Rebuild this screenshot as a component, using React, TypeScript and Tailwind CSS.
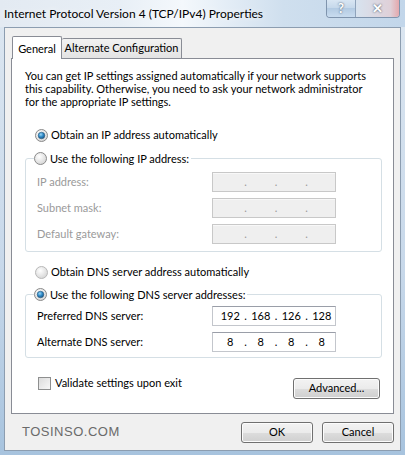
import React from "react";

const font = { fontFamily: 'Lato, "Noto Sans", sans-serif' };

function Radio({ checked, disabled }: { checked?: boolean; disabled?: boolean }) {
  return (
    <svg width="13" height="13" viewBox="0 0 13 13" className="shrink-0">
      <defs>
        <radialGradient id="rb" cx="0.4" cy="0.35" r="0.7">
          <stop offset="0" stopColor="#ffffff" />
          <stop offset="1" stopColor="#d4d4d4" />
        </radialGradient>
        <radialGradient id="rdot" cx="0.4" cy="0.35" r="0.7">
          <stop offset="0" stopColor="#9fd7f5" />
          <stop offset="0.5" stopColor="#2e8bc9" />
          <stop offset="1" stopColor="#1a4f7c" />
        </radialGradient>
      </defs>
      <circle cx="6.5" cy="6.5" r="6" fill="url(#rb)" stroke={disabled ? "#b8b8b8" : "#8a8a8a"} />
      {checked && <circle cx="6.5" cy="6.5" r="3.3" fill="url(#rdot)" stroke="#2a5a80" strokeWidth="0.6" />}
    </svg>
  );
}

function IpBox({ values, disabled }: { values?: string[]; disabled?: boolean }) {
  const v = values ?? ["", "", "", ""];
  return (
    <div
      className={`flex h-[20px] w-[124px] items-center pl-[4px] border ${
        disabled
          ? "bg-[#efefef] border-[#c8c8c8] shadow-[inset_0_1px_0_#f8f8f8]"
          : "bg-white border-[#c3c6cc] border-t-[#9a9ea8]"
      }`}
    >
      {v.map((x, i) => (
        <React.Fragment key={i}>
          <span className="w-[27px] text-center text-[11px] text-black">{x}</span>
          {i < 3 && (
            <span className={`w-[4px] text-center text-[11px] ${disabled ? "text-[#9a9a9a]" : "text-black"}`}>.</span>
          )}
        </React.Fragment>
      ))}
    </div>
  );
}

function Row({ label, disabled, values }: { label: string; disabled?: boolean; values?: string[] }) {
  return (
    <div className="flex h-[26px] items-center justify-between pl-[11px] pr-[45px]">
      <span className={`text-[11px] ${disabled ? "text-[#9a9a9a]" : "text-black"}`}>{label}</span>
      <IpBox disabled={disabled} values={values} />
    </div>
  );
}

function Button({ children, w }: { children: React.ReactNode; w: string }) {
  return (
    <button
      className={`${w} h-[21px] rounded-[3px] border border-[#707070] bg-[linear-gradient(#f3f3f3_0%,#ebebeb_50%,#dddddd_50%,#cfcfcf_100%)] text-[11px] text-black shadow-[inset_0_0_0_1px_#fcfcfc]`}
    >
      {children}
    </button>
  );
}

export default function App() {
  return (
    <div
      style={font}
      className="flex h-[455px] w-[405px] flex-col whitespace-nowrap bg-[linear-gradient(180deg,#dde7f1_0%,#c7d8ea_60%,#a7c3de_100%)]"
    >
      {/* Title bar */}
      <div className="relative flex h-[27px] shrink-0 items-center bg-[linear-gradient(90deg,#e3eaf2_0%,#e8eff6_30%,#f4f8fc_45%,#cfdfee_70%,#c2d6ea_100%)] pl-[4px]">
        <span className="text-[12px] text-black [text-shadow:0_0_6px_#ffffff]">
          Internet Protocol Version 4 (TCP/IPv4) Properties
        </span>
        <div className="absolute right-[5px] top-0 flex h-[18px] overflow-hidden rounded-b-[4px] border border-t-0 border-[#7f94ad]">
          <div className="flex w-[29px] items-center justify-center border-r border-[#8fa3bb] bg-[linear-gradient(#d9e6f3,#c4d7ea_50%,#b3cbe3_50%,#c9dcef)] text-[13px] font-bold text-white [text-shadow:0_0_2px_#2d3e52]">
            ?
          </div>
          <div className="flex w-[43px] items-center justify-center bg-[linear-gradient(90deg,#d7e3ef,#dfd0d8_80%,#e4a8ad)] text-[13px] font-bold text-white [text-shadow:0_0_2px_#2d3e52]">
            ✕
          </div>
        </div>
      </div>

      {/* Dialog body */}
      <div className="mx-[4px] flex flex-1 flex-col border border-[#8c9db0] bg-[#f0f0f0] px-[6px] pt-[7px]">
        {/* Tabs */}
        <div className="flex h-[23px] items-end pl-[1px]">
          <div className="relative z-10 -mb-px flex h-[23px] w-[50px] items-start justify-center rounded-t-[2px] border border-b-0 border-[#898c95] bg-white pt-[4px] text-[11px]">
            General
          </div>
          <div className="flex h-[20px] w-[120px] items-center justify-center rounded-t-[2px] border border-b-0 border-l-0 border-[#898c95] bg-[linear-gradient(#f2f2f2,#e3e3e3)] text-[11px]">
            Alternate Configuration
          </div>
        </div>

        {/* Panel */}
        <div className="flex h-[356px] flex-col border border-[#898c95] bg-white pl-[13px] pr-[11px] pt-[10px]">
          <p className="text-[11px] leading-[13px] text-black">
            You can get IP settings assigned automatically if your network supports
            <br />
            this capability. Otherwise, you need to ask your network administrator
            <br />
            for the appropriate IP settings.
          </p>

          <div className="mt-[21px] flex h-[13px] items-center gap-[3px] pl-[10px] text-[11px]">
            <Radio checked />
            <span>Obtain an IP address automatically</span>
          </div>

          <fieldset className="mt-[9px] rounded-[3px] border border-[#d5dfe5] pb-[4px]">
            <legend className="ml-[8px] flex items-center gap-[3px] bg-white pr-[2px] text-[11px] leading-[15px]">
              <Radio />
              <span>Use the following IP address:</span>
            </legend>
            <div className="pt-[3px]">
              <Row label="IP address:" disabled />
              <Row label="Subnet mask:" disabled />
              <Row label="Default gateway:" disabled />
            </div>
          </fieldset>

          <div className="mt-[14px] flex h-[13px] items-center gap-[3px] pl-[10px] text-[11px]">
            <Radio disabled />
            <span>Obtain DNS server address automatically</span>
          </div>

          <fieldset className="mt-[8px] rounded-[3px] border border-[#d5dfe5] pb-[2px]">
            <legend className="ml-[8px] flex items-center gap-[3px] bg-white pr-[2px] text-[11px] leading-[15px]">
              <Radio checked />
              <span>Use the following DNS server addresses:</span>
            </legend>
            <div className="pt-[1px]">
              <Row label="Preferred DNS server:" values={["192", "168", "126", "128"]} />
              <Row label="Alternate DNS server:" values={["8", "8", "8", "8"]} />
            </div>
          </fieldset>

          <div className="mt-[20px] flex items-start justify-between pl-[13px] pr-[2px]">
            <div className="-mt-[1px] flex h-[13px] items-center gap-[4px] text-[11px]">
              <span className="h-[13px] w-[13px] border border-[#8e8f8f] bg-[linear-gradient(135deg,#dcdcdc,#f8f8f8)]" />
              <span>Validate settings upon exit</span>
            </div>
            <Button w="w-[87px]">Advanced...</Button>
          </div>
        </div>

        {/* Footer */}
        <div className="flex h-[36px] items-center justify-between pl-[11px]">
          <span className="text-[13px] tracking-[0.5px] text-[#6a6a6a]" style={{ fontFamily: '"Liberation Sans", Arial, sans-serif' }}>
            TOSINSO.COM
          </span>
          <div className="flex gap-[9px]">
            <Button w="w-[72px]">OK</Button>
            <Button w="w-[72px]">Cancel</Button>
          </div>
        </div>
      </div>
      <div className="h-[5px] shrink-0" />
    </div>
  );
}
